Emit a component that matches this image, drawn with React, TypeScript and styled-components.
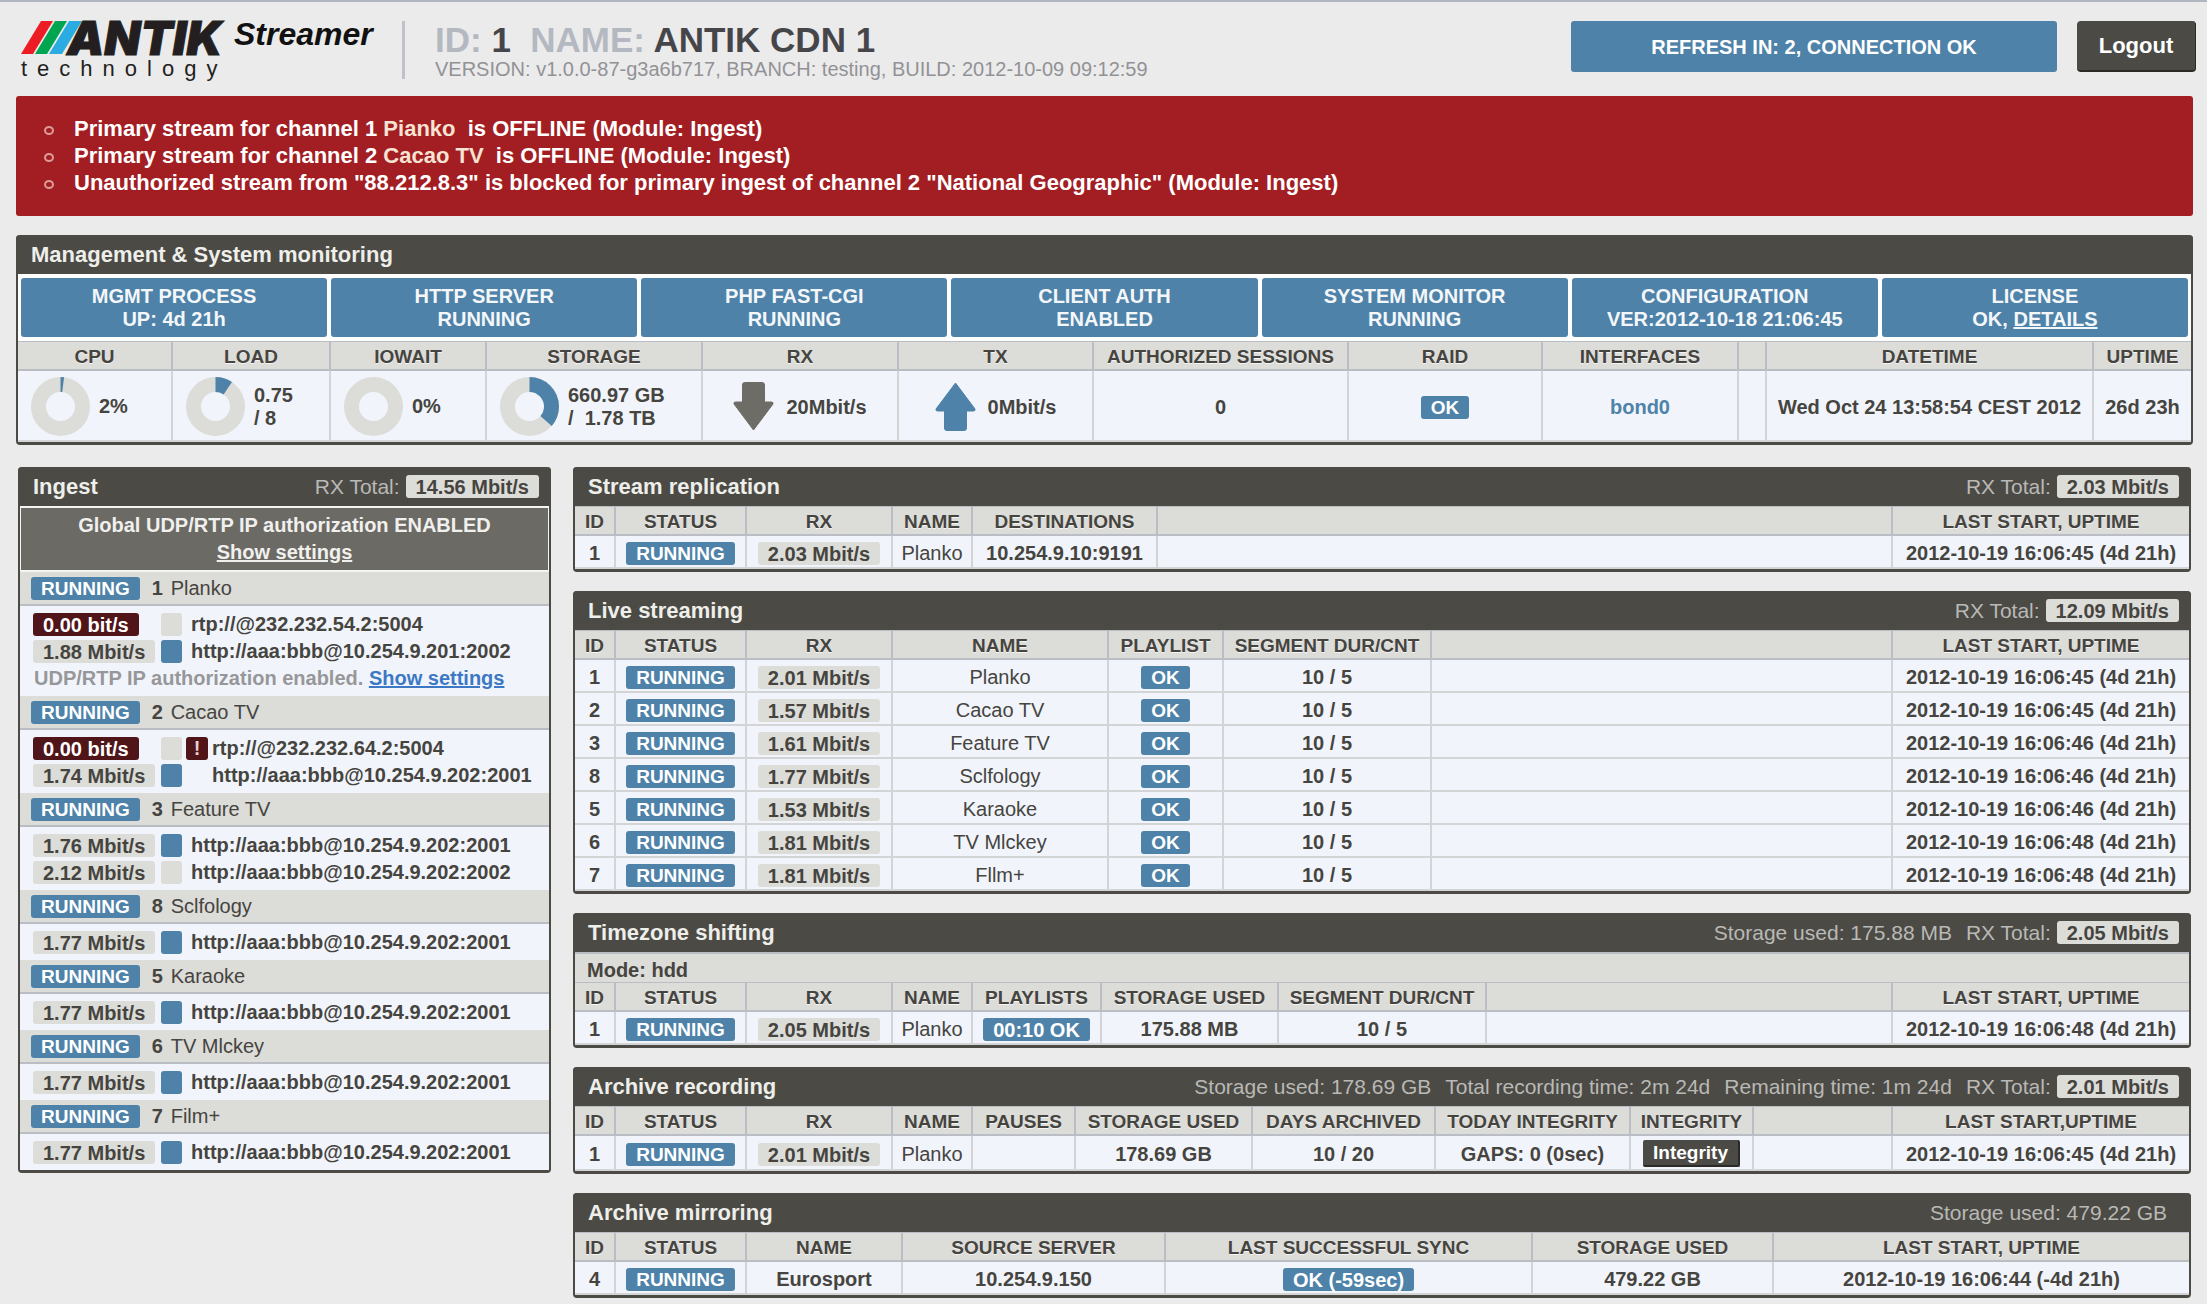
import React from "react";
import styled, { createGlobalStyle, css } from "styled-components";

const color = {
  page: "#ebebeb",
  dark: "#4b4a45",
  blue: "#4e82a8",
  red: "#a21e22",
  maroon: "#501519",
  stone: "#dcdcd9",
  cell: "#f1f5fb",
  text: "#46443f",
  line: "#bbbdc4",
  softLine: "#d3d4d6",
};

const GlobalStyle = createGlobalStyle`
  *, *::before, *::after { box-sizing: border-box; }
  body {
    margin: 0;
    background: ${color.page};
    color: ${color.text};
    font: bold 20px/24px "Liberation Sans", Arial, sans-serif;
  }
`;

const Page = styled.div`
  min-height: 100vh;
  border-top: 2px solid #b1b7c0;
  padding: 19px 14px 5px 16px;
`;

/* ---------- top bar ---------- */

const TopBar = styled.header`
  display: flex;
  align-items: flex-start;
  height: 75px;
  margin-right: -3px;
`;

const Brand = styled.div`
  display: grid;
  grid-template-columns: 209px auto;
  column-gap: 4px;
  padding-left: 5px;
  width: 386px;
  color: #231f20;
`;

const Wordmark = styled.div`
  display: flex;
  height: 34px;
`;

const Stripes = styled.svg`
  display: block;
  flex: none;
  width: 62px;
  height: 34px;
  margin-right: -16px;
`;

const BrandName = styled.span`
  font: italic 900 47px/34px Inter, "Liberation Sans", sans-serif;
  -webkit-text-stroke: 1px currentColor;
`;

const Product = styled.span`
  font: italic bold 32px/26px "Liberation Sans", Arial, sans-serif;
  color: #111;
`;

const Tagline = styled.span`
  grid-column: 1 / -1;
  font: normal 22px/24px "Liberation Sans", Arial, sans-serif;
  letter-spacing: 10px;
  margin-top: 2px;
`;

const Identity = styled.div`
  border-left: 3px solid #bfc2cd;
  height: 58px;
  padding: 2px 0 0 30px;
  white-space: nowrap;
  flex: 1;
`;

const ServerTitle = styled.h1`
  margin: 0;
  font-size: 35px;
  line-height: 34px;
  color: #46464a;
`;

const TitleKey = styled.span`
  color: #b4b8c0;
`;

const Version = styled.p`
  margin: 0;
  font-weight: normal;
  line-height: 24px;
  color: #929296;
`;

const Refresh = styled.div`
  flex: 0 0 486px;
  height: 51px;
  line-height: 52px;
  margin-right: 20px;
  border-radius: 3px;
  background: ${color.blue};
  color: #fff;
  text-align: center;
`;

const Logout = styled.button`
  flex: 0 0 119px;
  height: 51px;
  padding: 0;
  border: 0;
  border-right: 1px solid #2b2a27;
  border-bottom: 2px solid #2b2a27;
  border-radius: 4px;
  background: ${color.dark};
  color: #fff;
  font: inherit;
  font-size: 22px;
`;

/* ---------- alerts ---------- */

const Alerts = styled.ul`
  margin: 0;
  padding: 19px 12px 20px 58px;
  list-style: none;
  border-radius: 3px;
  background: ${color.red};
  color: #fff;
  font-size: 22px;
  line-height: 27px;
`;

const Alert = styled.li`
  display: flex;
  align-items: center;
  &::before {
    content: "";
    flex: none;
    width: 10px;
    height: 9px;
    margin: 3px 20px 0 -30px;
    border: 2px solid #dc9c98;
    border-radius: 50%;
  }
`;

const AlertText = styled.span`
  white-space: pre-wrap;
`;

const ChannelRef = styled.span`
  color: #f7e3d3;
`;

/* ---------- panels ---------- */

const Panel = styled.section`
  border: solid ${color.dark};
  border-width: 0 2px 3px;
  border-radius: 4px;
  background: #fff;
`;

const PanelHead = styled.div`
  display: flex;
  align-items: center;
  justify-content: space-between;
  height: 39px;
  margin: 0 -2px;
  padding: 0 12px 0 15px;
  border-radius: 4px 4px 0 0;
  background: ${color.dark};
`;

const PanelTitle = styled.h2`
  margin: 0;
  font-size: 22px;
  color: #eeeeea;
`;

const Totals = styled.div`
  display: flex;
  align-items: center;
  gap: 14px;
  font-size: 21px;
  font-weight: normal;
  color: #b9b9b6;
`;

const Total = styled.span<{ $end?: boolean }>`
  display: flex;
  align-items: center;
  gap: 6px;
  padding-right: ${(p) => (p.$end ? 12 : 0)}px;
`;

type Tone = "blue" | "stone" | "maroon";

const toneCss = {
  blue: css`
    background: ${color.blue};
    color: #fff;
  `,
  stone: css`
    background: ${color.stone};
    color: ${color.text};
  `,
  maroon: css`
    background: ${color.maroon};
    color: #fff;
  `,
};

const Badge = styled.span<{ $tone: Tone; $size?: number }>`
  display: inline-block;
  height: 23px;
  padding: 0 10px;
  border-radius: 3px;
  font-size: ${(p) => p.$size ?? 20}px;
  font-weight: bold;
  line-height: 24px;
  white-space: nowrap;
  vertical-align: middle;
  ${(p) => toneCss[p.$tone]}
`;

const Running = () => (
  <Badge $tone="blue" $size={19}>
    RUNNING
  </Badge>
);
const Ok = () => (
  <Badge $tone="blue" $size={19}>
    OK
  </Badge>
);
const Rate = ({ children }: { children: React.ReactNode }) => <Badge $tone="stone">{children}</Badge>;

/* ---------- management ---------- */

const Services = styled.div`
  display: grid;
  grid-template-columns: repeat(7, 1fr);
  gap: 4px;
  padding: 4px 3px;
`;

const Service = styled.div`
  padding: 7px 0 6px;
  border-radius: 3px;
  background: ${color.blue};
  color: #f4f7fa;
  line-height: 23px;
  text-align: center;
`;

const Line = styled.span`
  display: block;
`;

const PlainLink = styled.a`
  color: inherit;
`;

const Grid = styled.table`
  width: 100%;
  table-layout: fixed;
  border-collapse: separate;
  border-spacing: 0;
`;

const Th = styled.th`
  height: 30px;
  padding: 3px 0 0;
  border: solid ${color.line};
  border-width: 1px 2px 2px 0;
  background: ${color.stone};
  font-size: 19px;
  line-height: 22px;
  text-align: center;
  white-space: nowrap;
  text-shadow: 0 1px 0 #f4f4f4;
  &:last-child {
    border-right: 0;
  }
`;

const Td = styled.td<{ $height: number }>`
  height: ${(p) => p.$height}px;
  padding: 2px 0 0;
  border: solid ${color.softLine};
  border-width: 0 2px 2px 0;
  background: ${color.cell};
  text-align: center;
  vertical-align: middle;
  white-space: nowrap;
  &:last-child {
    border-right: 0;
  }
`;

const Name = styled.span`
  font-weight: normal;
`;

const Gauge = styled.div`
  display: flex;
  align-items: center;
  gap: 9px;
  padding-left: 13px;
  line-height: 23px;
  text-align: left;
  white-space: pre;
`;

const Traffic = styled.div`
  display: flex;
  align-items: center;
  justify-content: center;
  gap: 12px;
`;

const InterfaceLink = styled.a`
  color: ${color.blue};
  text-decoration: none;
`;

const Donut = ({ value }: { value: number }) => {
  const r = 22;
  const length = 2 * Math.PI * r;
  return (
    <svg width="59" height="59" viewBox="0 0 59 59" aria-hidden="true">
      <circle cx="29.5" cy="29.5" r={r} fill="none" stroke="#dcdcd9" strokeWidth="15" />
      {value > 0 && (
        <circle
          cx="29.5"
          cy="29.5"
          r={r}
          fill="none"
          stroke={color.blue}
          strokeWidth="15"
          strokeDasharray={`${length * value} ${length}`}
          transform="rotate(-90 29.5 29.5)"
        />
      )}
    </svg>
  );
};

const Arrow = ({ up }: { up?: boolean }) => (
  <svg width="41" height="49" viewBox="0 0 41 49" aria-hidden="true">
    <path
      d="M20.5 1 L40 27 Q40.500 29 38.500 29 H31.500 V46 Q31.500 48.500 29.500 48.500 H11.500 Q9.500 48.500 9.500 46 V29 H2.500 Q.5 29 1 27 Z"
      fill={up ? color.blue : "#6e6c66"}
      stroke={up ? color.blue : "#6e6c66"}
      strokeLinejoin="round"
      transform={up ? undefined : "rotate(180 20.5 24.5)"}
    />
  </svg>
);

const services: [string, React.ReactNode][] = [
  ["MGMT PROCESS", "UP: 4d 21h"],
  ["HTTP SERVER", "RUNNING"],
  ["PHP FAST-CGI", "RUNNING"],
  ["CLIENT AUTH", "ENABLED"],
  ["SYSTEM MONITOR", "RUNNING"],
  ["CONFIGURATION", "VER:2012-10-18 21:06:45"],
  [
    "LICENSE",
    <>
      OK, <PlainLink href="#license">DETAILS</PlainLink>
    </>,
  ],
];

/* ---------- data tables ---------- */

type Column = { label: string; width?: number };

type DataTableProps = { columns: Column[]; rows: React.ReactNode[][]; rowHeight?: number };

const DataTable = ({ columns, rows, rowHeight = 33 }: DataTableProps) => (
  <Grid>
    <colgroup>
      {columns.map((c, i) => (
        <col key={i} width={c.width} />
      ))}
    </colgroup>
    <thead>
      <tr>
        {columns.map((c, i) => (
          <Th key={i} scope="col">
            {c.label}
          </Th>
        ))}
      </tr>
    </thead>
    <tbody>
      {rows.map((row, r) => (
        <tr key={r}>
          {row.map((cell, i) => (
            <Td key={i} $height={rowHeight}>
              {cell}
            </Td>
          ))}
        </tr>
      ))}
    </tbody>
  </Grid>
);

type ModuleProps = { title: string; totals: React.ReactNode; children: React.ReactNode };

const Module = ({ title, totals, children }: ModuleProps) => (
  <Panel>
    <PanelHead>
      <PanelTitle>{title}</PanelTitle>
      <Totals>{totals}</Totals>
    </PanelHead>
    {children}
  </Panel>
);

const RxTotal = ({ value }: { value: string }) => (
  <Total>
    RX Total: <Rate>{value}</Rate>
  </Total>
);

const Columns = styled.main`
  display: grid;
  grid-template-columns: 533px minmax(0, 1fr);
  align-items: start;
  gap: 22px;
  padding: 22px 2px 0;
`;

const Modules = styled.div`
  display: grid;
  gap: 19px;
`;

const ModeBar = styled.div`
  height: 30px;
  padding: 4px 12px 0;
  border-top: 2px solid ${color.line};
  background: ${color.stone};
`;

const IntegrityButton = styled.button`
  width: 97px;
  height: 27px;
  padding: 0;
  border: 0;
  border-right: 2px solid #2b2a27;
  border-bottom: 2px solid #2b2a27;
  border-radius: 2px;
  background: ${color.dark};
  color: #fff;
  font: inherit;
  font-size: 19px;
  line-height: 24px;
  vertical-align: middle;
`;

/* ---------- ingest ---------- */

const GlobalNotice = styled.div`
  height: 66px;
  padding: 4px 0 0;
  border: 2px solid #f4f4f2;
  border-width: 2px 1px;
  background: #6c6a64;
  color: #f0f0ee;
  line-height: 27px;
  text-align: center;
`;

const ChannelHead = styled.div`
  display: flex;
  align-items: center;
  height: 34px;
  padding-left: 11px;
  border-bottom: 2px solid ${color.line};
  background: ${color.stone};
`;

const ChannelId = styled.span`
  width: 19px;
  margin-left: 12px;
`;

const Sources = styled.div`
  display: grid;
  gap: 3px;
  padding: 6px 0 6px 13px;
  background: ${color.cell};
`;

const Source = styled.div`
  display: grid;
  grid-template-columns: 128px 21px auto;
  align-items: center;
  justify-items: start;
  height: 24px;
`;

const Square = styled.span<{ $on?: boolean }>`
  width: 21px;
  height: 23px;
  border-radius: 3px;
  background: ${(p) => (p.$on ? color.blue : color.stone)};
`;

const Address = styled.span<{ $flagged?: boolean }>`
  padding-left: ${(p) => (p.$flagged ? 30 : 9)}px;
  white-space: nowrap;
`;

const Warned = styled.span`
  display: flex;
  align-items: center;
  gap: 4px;
  padding-left: 4px;
`;

const Warning = styled.span`
  width: 22px;
  height: 23px;
  border-radius: 3px;
  background: ${color.maroon};
  color: #e8cfd0;
  line-height: 22px;
  text-align: center;
`;

const Note = styled.p`
  margin: 0;
  padding-left: 1px;
  color: #97979a;
  line-height: 24px;
`;

const NoteLink = styled.a`
  color: #3d78c4;
`;

type SourceInfo = { rate: string; url: string; on?: boolean; warn?: boolean };
type Channel = { id: number; name: string; sources: SourceInfo[]; note?: boolean };

const base = "http://aaa:bbb@10.254.9.";
const single: SourceInfo[] = [{ rate: "1.77 Mbit/s", url: base + "202:2001", on: true }];

const channels: Channel[] = [
  {
    id: 1,
    name: "Planko",
    note: true,
    sources: [
      { rate: "0.00 bit/s", url: "rtp://@232.232.54.2:5004" },
      { rate: "1.88 Mbit/s", url: base + "201:2002", on: true },
    ],
  },
  {
    id: 2,
    name: "Cacao TV",
    sources: [
      { rate: "0.00 bit/s", url: "rtp://@232.232.64.2:5004", warn: true },
      { rate: "1.74 Mbit/s", url: base + "202:2001", on: true },
    ],
  },
  {
    id: 3,
    name: "Feature TV",
    sources: [
      { rate: "1.76 Mbit/s", url: base + "202:2001", on: true },
      { rate: "2.12 Mbit/s", url: base + "202:2002" },
    ],
  },
  { id: 8, name: "Sclfology", sources: single },
  { id: 5, name: "Karaoke", sources: single },
  { id: 6, name: "TV Mlckey", sources: single },
  { id: 7, name: "Film+", sources: single },
];

const ChannelBlock = ({ channel }: { channel: Channel }) => {
  const flagged = channel.sources.some((s) => s.warn);
  return (
    <>
      <ChannelHead>
        <Running />
        <ChannelId>{channel.id}</ChannelId>
        <Name>{channel.name}</Name>
      </ChannelHead>
      <Sources>
        {channel.sources.map((s) => (
          <Source key={s.url}>
            <Badge $tone={s.rate.startsWith("0.00") ? "maroon" : "stone"}>{s.rate}</Badge>
            <Square $on={s.on} />
            {s.warn ? (
              <Warned>
                <Warning>!</Warning>
                {s.url}
              </Warned>
            ) : (
              <Address $flagged={flagged}>{s.url}</Address>
            )}
          </Source>
        ))}
        {channel.note && (
          <Note>
            UDP/RTP IP authorization enabled. <NoteLink href="#channel-settings">Show settings</NoteLink>
          </Note>
        )}
      </Sources>
    </>
  );
};

/* ---------- table contents ---------- */

const live: [number, string, string, string][] = [
  [1, "2.01", "Planko", "45"],
  [2, "1.57", "Cacao TV", "45"],
  [3, "1.61", "Feature TV", "46"],
  [8, "1.77", "Sclfology", "46"],
  [5, "1.53", "Karaoke", "46"],
  [6, "1.81", "TV Mlckey", "48"],
  [7, "1.81", "Fllm+", "48"],
];

const started = (seconds: string) => `2012-10-19 16:06:${seconds} (4d 21h)`;

const lead: Column[] = [
  { label: "ID", width: 41 },
  { label: "STATUS", width: 131 },
  { label: "RX", width: 146 },
];
const tail: Column[] = [{ label: "" }, { label: "LAST START, UPTIME", width: 296 }];

export default function App() {
  return (
    <>
      <GlobalStyle />
      <Page>
        <TopBar>
          <Brand>
            <Wordmark>
              <Stripes viewBox="0 0 62 34" aria-hidden="true">
                <path d="M20 0 H32 L12 33 H0 Z" fill="#ed1c24" />
                <path d="M34 0 H46 L26 33 H14 Z" fill="#00a551" />
                <path d="M48 0 H61 L41 33 H28 Z" fill="#2aabe2" />
              </Stripes>
              <BrandName>ANTIK</BrandName>
            </Wordmark>
            <Product>Streamer</Product>
            <Tagline>technology</Tagline>
          </Brand>
          <Identity>
            <ServerTitle>
              <TitleKey>ID:</TitleKey> 1&nbsp; <TitleKey>NAME:</TitleKey> ANTIK CDN 1
            </ServerTitle>
            <Version>VERSION: v1.0.0-87-g3a6b717, BRANCH: testing, BUILD: 2012-10-09 09:12:59</Version>
          </Identity>
          <Refresh>REFRESH IN: 2, CONNECTION OK</Refresh>
          <Logout type="button">Logout</Logout>
        </TopBar>

        <Alerts>
          <Alert>
            <AlertText>
              Primary stream for channel 1 <ChannelRef>Pianko</ChannelRef>
              {"  is OFFLINE (Module: Ingest)"}
            </AlertText>
          </Alert>
          <Alert>
            <AlertText>
              Primary stream for channel 2 <ChannelRef>Cacao TV</ChannelRef>
              {"  is OFFLINE (Module: Ingest)"}
            </AlertText>
          </Alert>
          <Alert>
            <AlertText>
              Unauthorized stream from "88.212.8.3" is blocked for primary ingest of channel 2 "National Geographic"
              (Module: Ingest)
            </AlertText>
          </Alert>
        </Alerts>

        <Management />

        <Columns>
          <Panel>
            <PanelHead>
              <PanelTitle>Ingest</PanelTitle>
              <Totals>
                <RxTotal value="14.56 Mbit/s" />
              </Totals>
            </PanelHead>
            <GlobalNotice>
              <Line>Global UDP/RTP IP authorization ENABLED</Line>
              <PlainLink href="#ingest-settings">Show settings</PlainLink>
            </GlobalNotice>
            {channels.map((c) => (
              <ChannelBlock key={c.id} channel={c} />
            ))}
          </Panel>

          <Modules>
            <Module title="Stream replication" totals={<RxTotal value="2.03 Mbit/s" />}>
              <DataTable
                columns={[...lead, { label: "NAME", width: 80 }, { label: "DESTINATIONS", width: 185 }, ...tail]}
                rows={[
                  [
                    "1",
                    <Running />,
                    <Rate>2.03 Mbit/s</Rate>,
                    <Name>Planko</Name>,
                    "10.254.9.10:9191",
                    "",
                    started("45"),
                  ],
                ]}
              />
            </Module>

            <Module title="Live streaming" totals={<RxTotal value="12.09 Mbit/s" />}>
              <DataTable
                columns={[
                  ...lead,
                  { label: "NAME", width: 216 },
                  { label: "PLAYLIST", width: 115 },
                  { label: "SEGMENT DUR/CNT", width: 208 },
                  ...tail,
                ]}
                rows={live.map(([id, rate, name, seconds]) => [
                  id,
                  <Running />,
                  <Rate>{rate} Mbit/s</Rate>,
                  <Name>{name}</Name>,
                  <Ok />,
                  "10 / 5",
                  "",
                  started(seconds),
                ])}
              />
            </Module>

            <Module
              title="Timezone shifting"
              totals={
                <>
                  <Total>Storage used: 175.88 MB</Total>
                  <RxTotal value="2.05 Mbit/s" />
                </>
              }
            >
              <ModeBar>Mode: hdd</ModeBar>
              <DataTable
                columns={[
                  ...lead,
                  { label: "NAME", width: 80 },
                  { label: "PLAYLISTS", width: 129 },
                  { label: "STORAGE USED", width: 177 },
                  { label: "SEGMENT DUR/CNT", width: 208 },
                  ...tail,
                ]}
                rows={[
                  [
                    "1",
                    <Running />,
                    <Rate>2.05 Mbit/s</Rate>,
                    <Name>Planko</Name>,
                    <Badge $tone="blue">00:10 OK</Badge>,
                    "175.88 MB",
                    "10 / 5",
                    "",
                    started("48"),
                  ],
                ]}
              />
            </Module>

            <Module
              title="Archive recording"
              totals={
                <>
                  <Total>Storage used: 178.69 GB</Total>
                  <Total>Total recording time: 2m 24d</Total>
                  <Total>Remaining time: 1m 24d</Total>
                  <RxTotal value="2.01 Mbit/s" />
                </>
              }
            >
              <DataTable
                rowHeight={35}
                columns={[
                  ...lead,
                  { label: "NAME", width: 80 },
                  { label: "PAUSES", width: 103 },
                  { label: "STORAGE USED", width: 177 },
                  { label: "DAYS ARCHIVED", width: 183 },
                  { label: "TODAY INTEGRITY", width: 195 },
                  { label: "INTEGRITY", width: 123 },
                  { label: "" },
                  { label: "LAST START,UPTIME", width: 296 },
                ]}
                rows={[
                  [
                    "1",
                    <Running />,
                    <Rate>2.01 Mbit/s</Rate>,
                    <Name>Planko</Name>,
                    "",
                    "178.69 GB",
                    "10 / 20",
                    "GAPS: 0 (0sec)",
                    <IntegrityButton type="button">Integrity</IntegrityButton>,
                    "",
                    started("45"),
                  ],
                ]}
              />
            </Module>

            <Module title="Archive mirroring" totals={<Total $end>Storage used: 479.22 GB</Total>}>
              <DataTable
                columns={[
                  { label: "ID", width: 41 },
                  { label: "STATUS", width: 131 },
                  { label: "NAME", width: 156 },
                  { label: "SOURCE SERVER", width: 263 },
                  { label: "LAST SUCCESSFUL SYNC" },
                  { label: "STORAGE USED", width: 241 },
                  { label: "LAST START, UPTIME", width: 415 },
                ]}
                rows={[
                  [
                    "4",
                    <Running />,
                    "Eurosport",
                    "10.254.9.150",
                    <Badge $tone="blue">OK (-59sec)</Badge>,
                    "479.22 GB",
                    "2012-10-19 16:06:44 (-4d 21h)",
                  ],
                ]}
              />
            </Module>
          </Modules>
        </Columns>
      </Page>
    </>
  );
}

const ManagementPanel = styled(Panel)`
  margin-top: 19px;
`;

function Management() {
  return (
    <ManagementPanel>
      <PanelHead>
        <PanelTitle>Management &amp; System monitoring</PanelTitle>
      </PanelHead>
      <Services>
        {services.map(([name, state]) => (
          <Service key={name}>
            <Line>{name}</Line>
            <Line>{state}</Line>
          </Service>
        ))}
      </Services>
      <DataTable
        rowHeight={71}
        columns={[
          { label: "CPU", width: 155 },
          { label: "LOAD", width: 158 },
          { label: "IOWAIT", width: 156 },
          { label: "STORAGE", width: 216 },
          { label: "RX", width: 196 },
          { label: "TX", width: 195 },
          { label: "AUTHORIZED SESSIONS", width: 255 },
          { label: "RAID", width: 194 },
          { label: "INTERFACES" },
          { label: "", width: 28 },
          { label: "DATETIME", width: 327 },
          { label: "UPTIME", width: 97 },
        ]}
        rows={[
          [
            <Gauge>
              <Donut value={0.02} />
              2%
            </Gauge>,
            <Gauge>
              <Donut value={0.094} />
              {"0.75\n/ 8"}
            </Gauge>,
            <Gauge>
              <Donut value={0} />
              0%
            </Gauge>,
            <Gauge>
              <Donut value={0.362} />
              {"660.97 GB\n/  1.78 TB"}
            </Gauge>,
            <Traffic>
              <Arrow />
              20Mbit/s
            </Traffic>,
            <Traffic>
              <Arrow up />
              0Mbit/s
            </Traffic>,
            "0",
            <Ok />,
            <InterfaceLink href="#bond0">bond0</InterfaceLink>,
            "",
            "Wed Oct 24 13:58:54 CEST 2012",
            "26d 23h",
          ],
        ]}
      />
    </ManagementPanel>
  );
}
